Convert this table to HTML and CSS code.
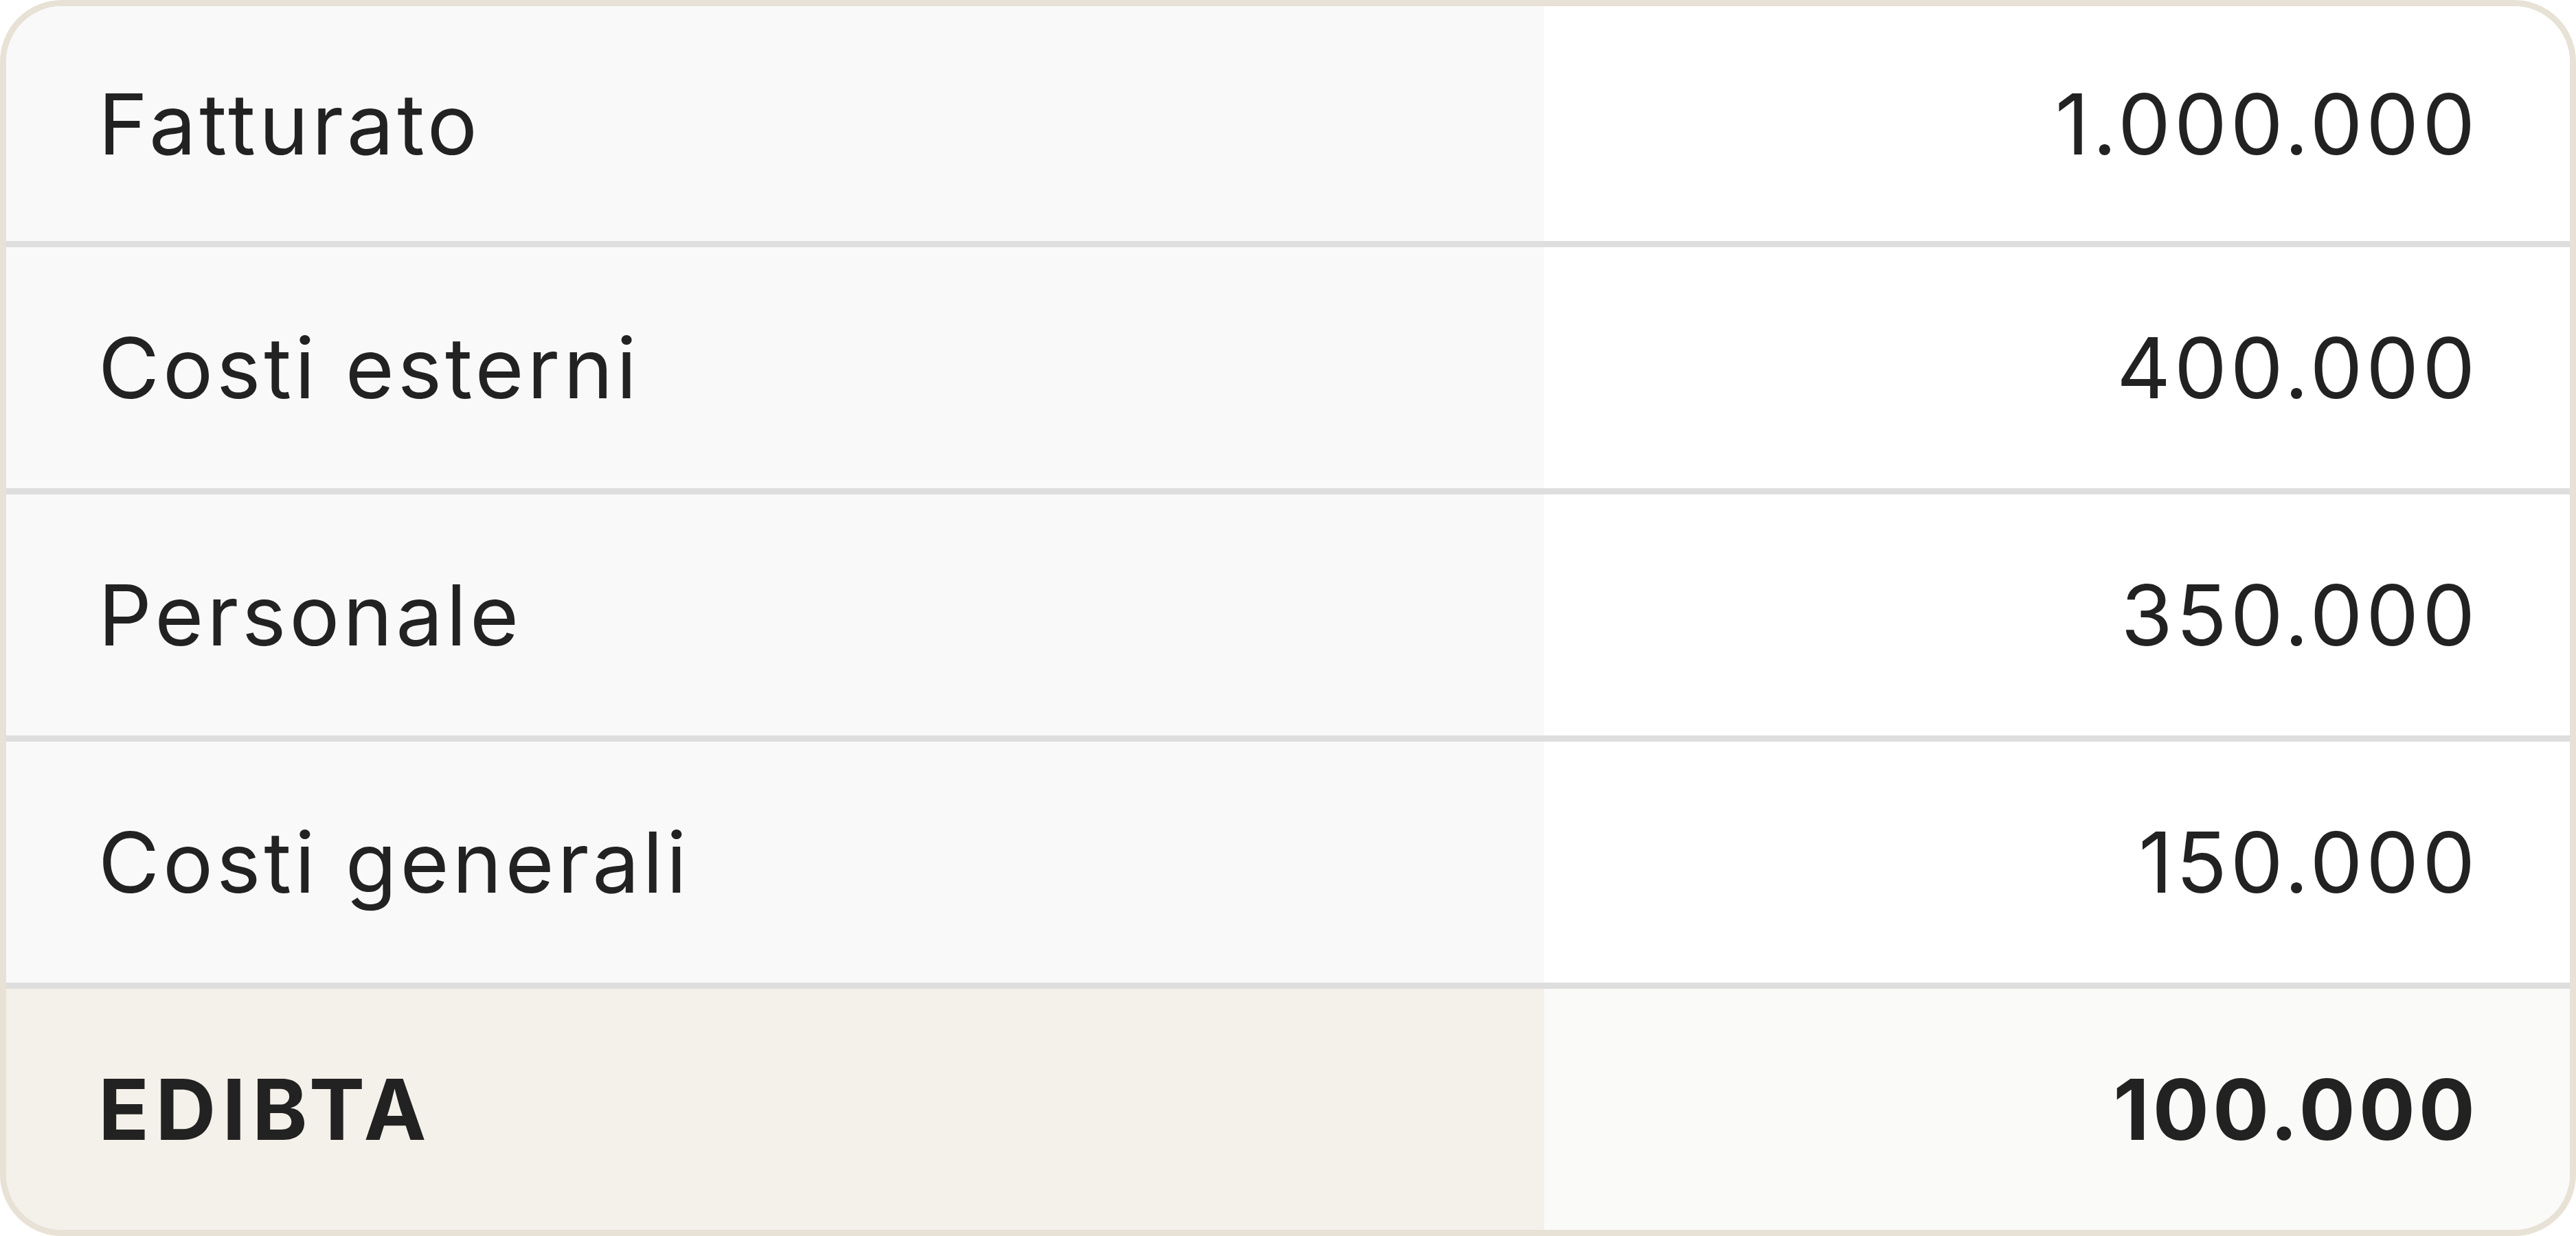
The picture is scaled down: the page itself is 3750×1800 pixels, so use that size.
FILE: index.html
```html
<!DOCTYPE html>
<html lang="it">
<head>
    <meta charset="utf-8">
    <title>Conto economico</title>
    <link rel="stylesheet" href="styles.css">
</head>
<body>
    <div class="pl-table">
        <div class="pl-row">
            <div class="pl-label">Fatturato</div>
            <div class="pl-value">1.000.000</div>
        </div>
        <div class="pl-row">
            <div class="pl-label">Costi esterni</div>
            <div class="pl-value">400.000</div>
        </div>
        <div class="pl-row">
            <div class="pl-label">Personale</div>
            <div class="pl-value">350.000</div>
        </div>
        <div class="pl-row">
            <div class="pl-label">Costi generali</div>
            <div class="pl-value">150.000</div>
        </div>
        <div class="pl-row total">
            <div class="pl-label">EDIBTA</div>
            <div class="pl-value">100.000</div>
        </div>
    </div>
</body>
</html>
```

FILE: styles.css
```css
body {
    margin: 0;
    font-family: Inter, "Noto Sans", sans-serif;
    color: #222222;
    background-color: #ffffff;
}
.pl-table {
    box-sizing: border-box;
    width: 3750px;
    height: 1800px;
    border: 9px solid #e8e2d6;
    border-radius: 90px;
    overflow: hidden;
    display: grid;
    grid-template-rows: 342px repeat(4, 360px);
}
.pl-row {
    display: grid;
    grid-template-columns: 60% 40%;
}
.pl-row + .pl-row {
    border-top: 9px solid #dedede;
}
.pl-label,
.pl-value {
    display: flex;
    align-items: center;
    font-size: 122px;
    letter-spacing: 0.04em;
}
.pl-label {
    background-color: #f9f9f9;
    padding-left: 134px;
}
.pl-value {
    background-color: #ffffff;
    justify-content: flex-end;
    padding-right: 133px;
}
.total .pl-label {
    background-color: #f4f0ea;
    font-weight: 700;
    letter-spacing: 0.075em;
}
.total .pl-value {
    background-color: #fafaf8;
    font-weight: 700;
}
```
